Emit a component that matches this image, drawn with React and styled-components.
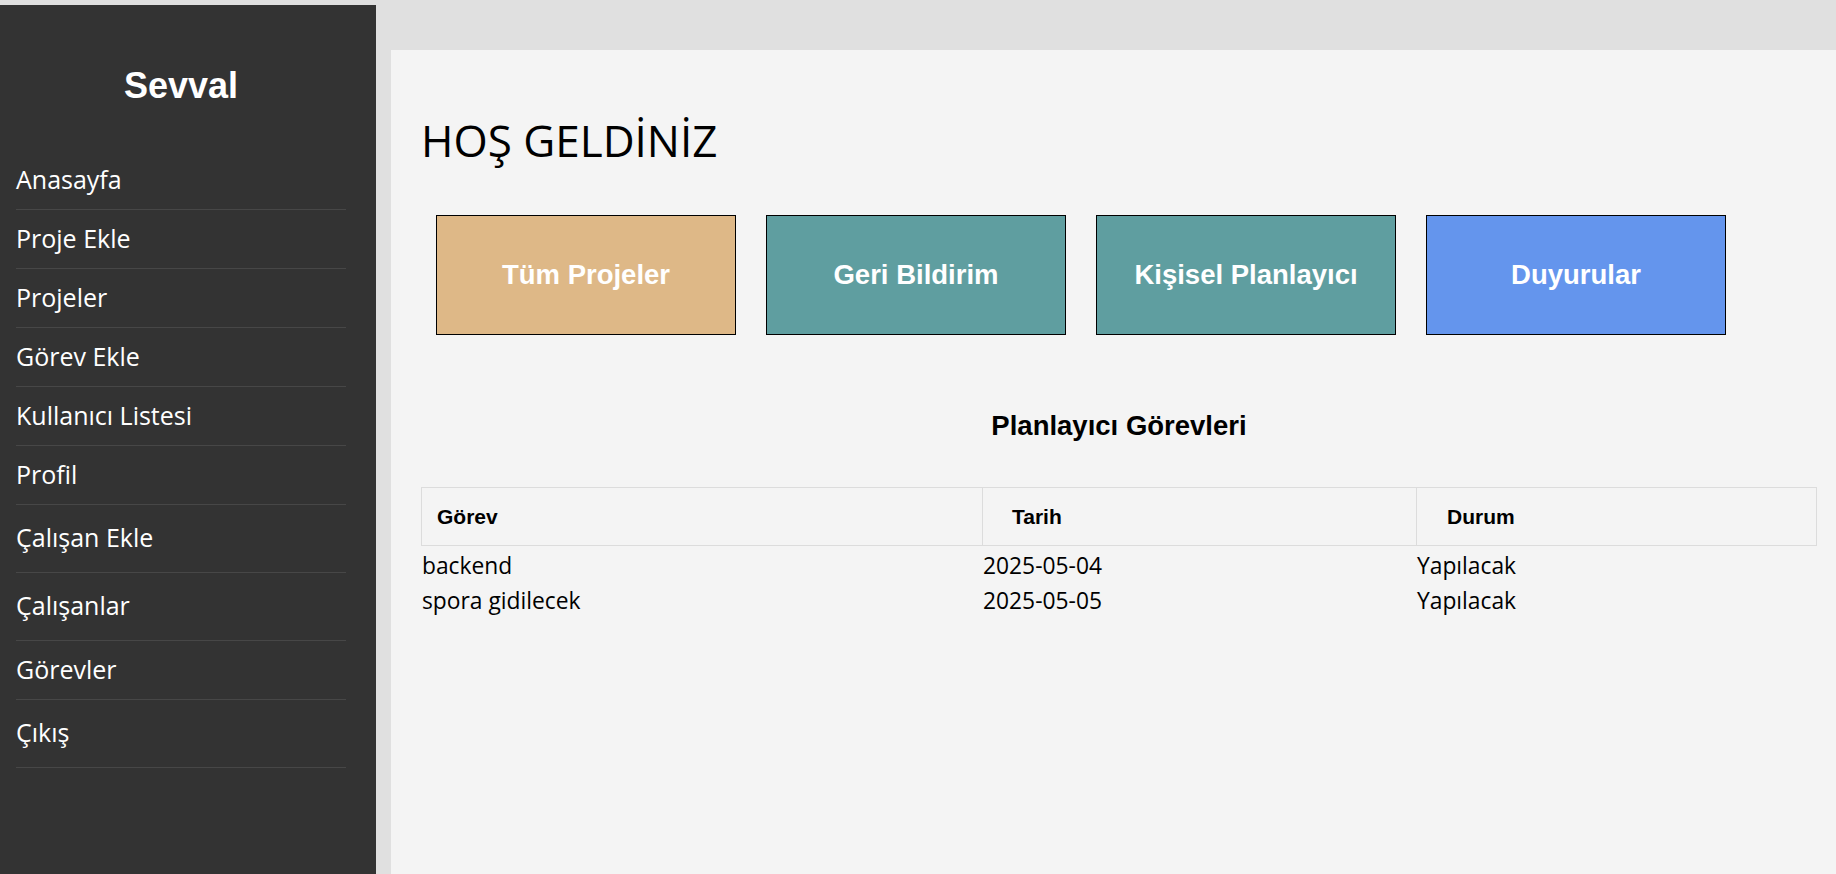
import React from "react";
import styled, { createGlobalStyle } from "styled-components";

const GlobalStyle = createGlobalStyle`
  html, body {
    margin: 0;
    padding: 0;
    background: #e0e0e0;
    font-family: "Open Sans", "Noto Sans", sans-serif;
    color: #000;
  }
  * { box-sizing: border-box; }
`;

const Page = styled.div`
  display: flex;
  align-items: stretch;
  min-height: 100vh;
`;

const Sidebar = styled.aside`
  width: 376px;
  flex: 0 0 376px;
  margin-top: 5px;
  background: #333333;
  padding: 60px 30px 0 16px;
  color: #fff;
`;

const Brand = styled.h2`
  margin: 0 0 44px;
  font-family: "Liberation Sans", Arial, sans-serif;
  font-weight: 700;
  font-size: 36px;
  line-height: 42px;
  text-align: center;
  color: #fff;
`;

const NavList = styled.nav`
  display: flex;
  flex-direction: column;
`;

const NavItem = styled.a`
  display: block;
  padding: 12px 0 14px;
  font-family: "Open Sans", "Noto Sans", sans-serif;
  font-size: 25px;
  line-height: ${(p) => (p.$tall ? "41px" : "32px")};
  color: #fff;
  text-decoration: none;
  border-bottom: 1px solid #474747;
`;

const Main = styled.main`
  flex: 1;
  margin: 50px 0 0 15px;
  background: #f4f4f4;
  padding: 60px 20px 40px 30px;
`;

const Welcome = styled.h1`
  margin: 0;
  font-family: "Open Sans", "Noto Sans", sans-serif;
  font-weight: 400;
  font-size: 44px;
  line-height: 60px;
  color: #000;
`;

const CardRow = styled.div`
  display: flex;
  margin-top: 30px;
`;

const Card = styled.a`
  width: 300px;
  height: 120px;
  margin: 15px;
  display: flex;
  align-items: center;
  justify-content: center;
  background: ${(p) => p.$bg};
  border: 1px solid #000;
  color: #fff;
  font-family: "Liberation Sans", Arial, sans-serif;
  font-weight: 700;
  font-size: 27.5px;
  text-decoration: none;
`;

const Planner = styled.section`
  width: 1396px;
  margin-top: 60px;
`;

const SectionTitle = styled.h3`
  margin: 0 0 45px;
  font-family: "Liberation Sans", Arial, sans-serif;
  font-weight: 700;
  font-size: 27.5px;
  line-height: 32px;
  text-align: center;
`;

const TaskGrid = styled.div`
  display: grid;
  grid-template-columns: 561px 434px 401px;
`;

const HeadCell = styled.div`
  padding: 17px 0 16px ${(p) => p.$indent}px;
  margin-bottom: 2px;
  font-family: "Liberation Sans", Arial, sans-serif;
  font-weight: 700;
  font-size: 21px;
  line-height: 24px;
  border-top: 1px solid #dcdcdc;
  border-bottom: 1px solid #dcdcdc;
  border-left: 1px solid #dcdcdc;
  ${(p) => (p.$last ? "border-right: 1px solid #dcdcdc;" : "")}
`;

const BodyCell = styled.div`
  padding: 2px 1px;
  font-family: "Open Sans", "Noto Sans", sans-serif;
  font-size: 22.8px;
  line-height: 31px;
`;

const navItems = [
  { label: "Anasayfa" },
  { label: "Proje Ekle" },
  { label: "Projeler" },
  { label: "Görev Ekle" },
  { label: "Kullanıcı Listesi" },
  { label: "Profil" },
  { label: "Çalışan Ekle", tall: true },
  { label: "Çalışanlar", tall: true },
  { label: "Görevler" },
  { label: "Çıkış", tall: true },
];

const cards = [
  { label: "Tüm Projeler", bg: "#deb887" },
  { label: "Geri Bildirim", bg: "#5f9ea0" },
  { label: "Kişisel Planlayıcı", bg: "#5f9ea0" },
  { label: "Duyurular", bg: "#6495ed" },
];

const tasks = [
  { name: "backend", date: "2025-05-04", status: "Yapılacak" },
  { name: "spora gidilecek", date: "2025-05-05", status: "Yapılacak" },
];

export default function App() {
  return (
    <>
      <GlobalStyle />
      <Page>
        <Sidebar>
          <Brand>Sevval</Brand>
          <NavList>
            {navItems.map((item) => (
              <NavItem key={item.label} $tall={item.tall}>
                {item.label}
              </NavItem>
            ))}
          </NavList>
        </Sidebar>
        <Main>
          <Welcome>HOŞ GELDİNİZ</Welcome>
          <CardRow>
            {cards.map((c) => (
              <Card key={c.label} $bg={c.bg}>
                {c.label}
              </Card>
            ))}
          </CardRow>
          <Planner>
            <SectionTitle>Planlayıcı Görevleri</SectionTitle>
            <TaskGrid>
              <HeadCell $indent={15}>Görev</HeadCell>
              <HeadCell $indent={29}>Tarih</HeadCell>
              <HeadCell $indent={30} $last>
                Durum
              </HeadCell>
              {tasks.map((t) => (
                <React.Fragment key={t.name}>
                  <BodyCell>{t.name}</BodyCell>
                  <BodyCell>{t.date}</BodyCell>
                  <BodyCell>{t.status}</BodyCell>
                </React.Fragment>
              ))}
            </TaskGrid>
          </Planner>
        </Main>
      </Page>
    </>
  );
}
